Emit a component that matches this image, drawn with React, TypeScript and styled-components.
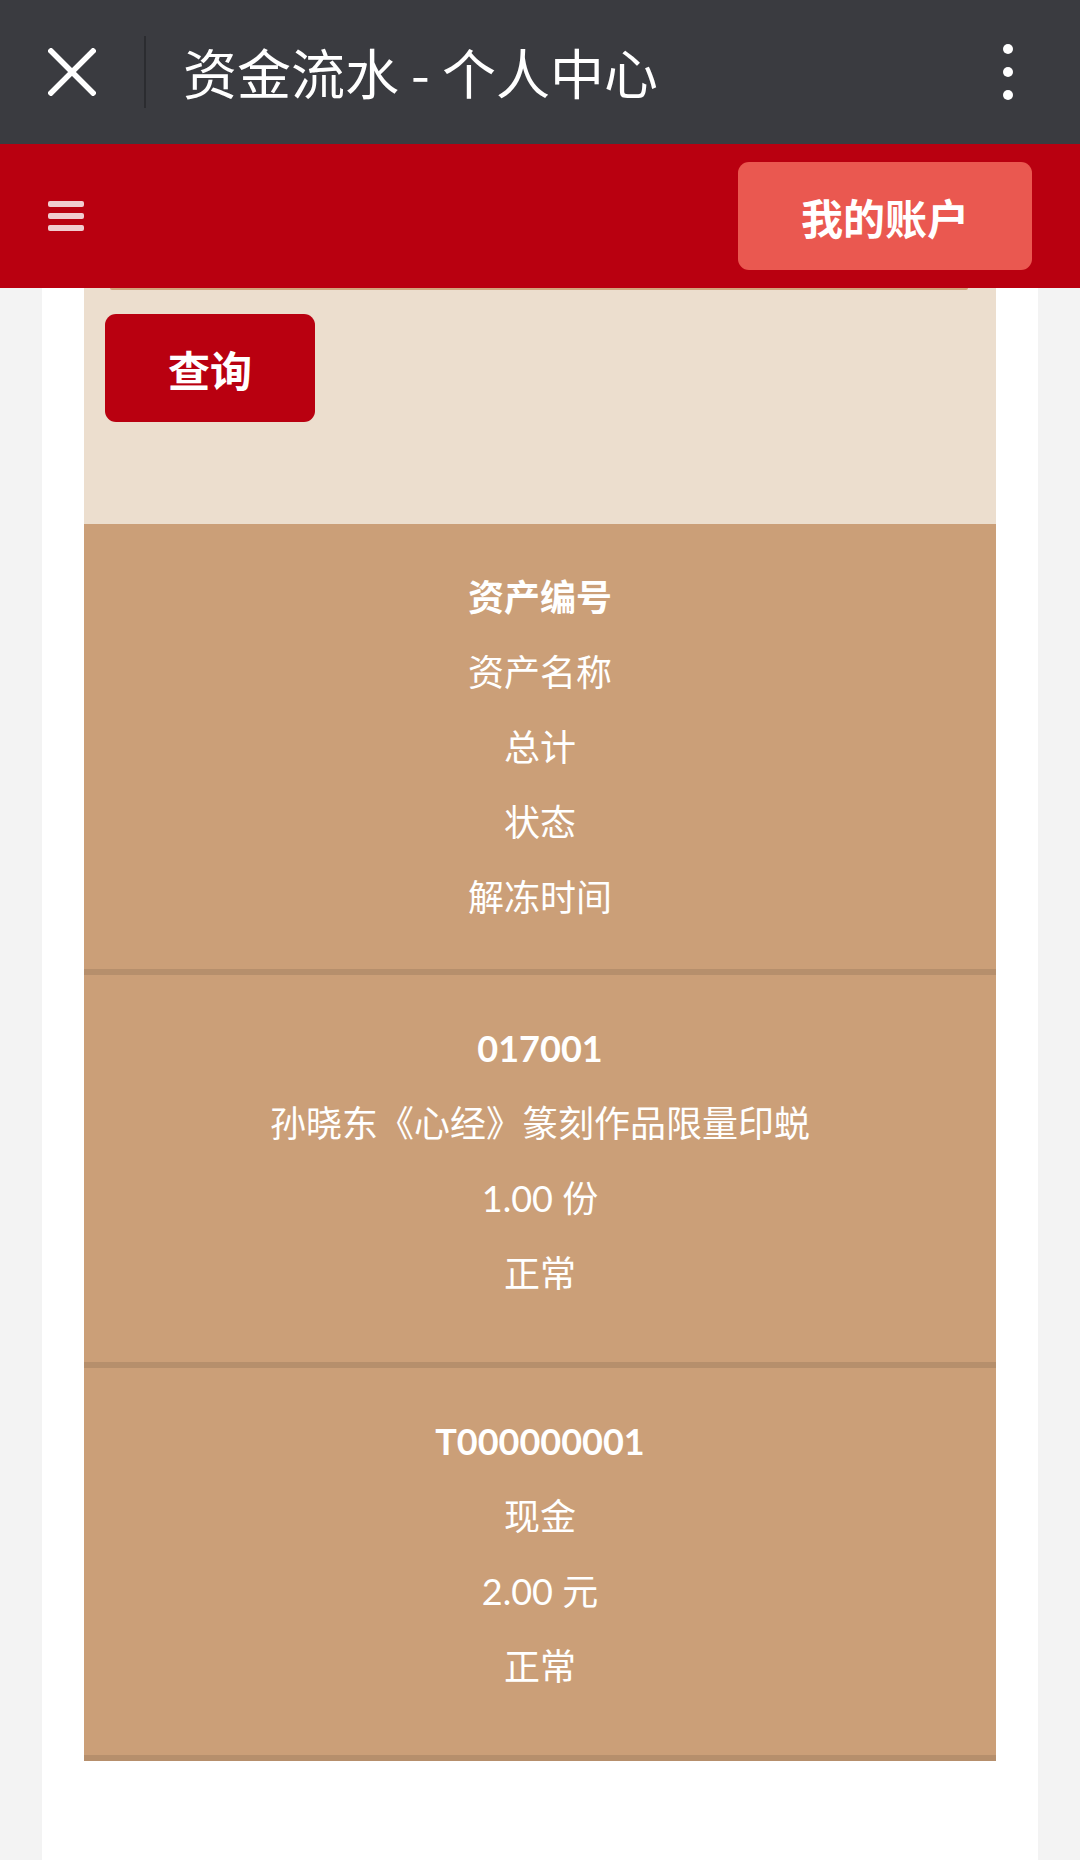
import React from "react";
import styled, { createGlobalStyle } from "styled-components";

const GlobalStyle = createGlobalStyle`
  html, body {
    margin: 0;
    padding: 0;
    background: #f3f3f3;
  }
  body {
    font-family: Lato, "Noto Sans CJK SC", sans-serif;
    -webkit-font-smoothing: antialiased;
  }
  * { box-sizing: border-box; }
`;

const Page = styled.div`
  width: 1080px;
  min-height: 1860px;
  display: flex;
  flex-direction: column;
  background: #f3f3f3;
`;

const TopBar = styled.header`
  height: 144px;
  background: #3a3b40;
  display: flex;
  align-items: center;
  padding-right: 67px;
`;

const CloseBox = styled.div`
  width: 144px;
  height: 144px;
  display: flex;
  align-items: center;
  justify-content: center;
`;

const Divider = styled.div`
  width: 2px;
  height: 72px;
  background: #2b2c30;
`;

const Title = styled.h1`
  margin: 0 0 0 37px;
  flex: 1;
  font-family: "Noto Sans CJK SC", sans-serif;
  font-weight: 400;
  font-size: 54px;
  line-height: 1;
  color: #ffffff;
  white-space: nowrap;
`;

const Dots = styled.div`
  display: flex;
  flex-direction: column;
  gap: 13px;
`;

const Dot = styled.span`
  width: 10px;
  height: 10px;
  border-radius: 50%;
  background: #ffffff;
`;

const NavBar = styled.nav`
  height: 144px;
  background: #b90010;
  display: flex;
  align-items: center;
  justify-content: space-between;
  padding: 0 48px;
`;

const Burger = styled.div`
  width: 36px;
  display: flex;
  flex-direction: column;
  gap: 6px;
`;

const BurgerBar = styled.span`
  height: 6px;
  border-radius: 2px;
  background: rgba(255, 255, 255, 0.8);
`;

const AccountButton = styled.button`
  width: 294px;
  height: 108px;
  border: none;
  border-radius: 11px;
  background: #ea5850;
  color: #ffffff;
  font-family: "Noto Sans CJK SC", sans-serif;
  font-weight: 700;
  font-size: 42px;
  padding: 0;
`;

const Body = styled.main`
  flex: 1;
  display: flex;
  padding: 0 42px;
`;

const Card = styled.section`
  flex: 1;
  background: #ffffff;
  padding: 0 42px;
`;

const FilterPanel = styled.div`
  background: #ecdece;
  padding: 0 0 102px 21px;
`;

const InputEdge = styled.div`
  height: 2px;
  margin: 0 28px 0 5px;
  background: #d1a57c;
  border-radius: 0 0 6px 6px;
`;

const QueryButton = styled.button`
  display: block;
  margin-top: 24px;
  width: 210px;
  height: 108px;
  border: none;
  border-radius: 11px;
  background: #b90010;
  color: #ffffff;
  font-family: "Noto Sans CJK SC", sans-serif;
  font-weight: 700;
  font-size: 42px;
  padding: 0;
`;

const Table = styled.div`
  display: flex;
  flex-direction: column;
`;

const Row = styled.div`
  background: #cb9f78;
  border-bottom: 6px solid #b68f6c;
  padding: 36px 0 34px;
  display: flex;
  flex-direction: column;
  align-items: center;
`;

const Cell = styled.div<{ $bold?: boolean; $empty?: boolean }>`
  height: ${(p) => (p.$empty ? "17px" : "75px")};
  line-height: 75px;
  font-size: 36px;
  color: #ffffff;
  font-weight: ${(p) => (p.$bold ? 700 : 400)};
  text-align: center;
  white-space: nowrap;
`;

type Item = { code: string; name: string; total: string; status: string; time: string };

const items: Item[] = [
  { code: "017001", name: "孙晓东《心经》篆刻作品限量印蜕", total: "1.00 份", status: "正常", time: "" },
  { code: "T000000001", name: "现金", total: "2.00 元", status: "正常", time: "" },
];

const CloseIcon = () => (
  <svg width="48" height="48" viewBox="0 0 48 48">
    <path d="M3 3 L45 45 M45 3 L3 45" stroke="#ffffff" strokeWidth="5.5" strokeLinecap="square" />
  </svg>
);

export default function App() {
  return (
    <Page>
      <GlobalStyle />
      <TopBar>
        <CloseBox>
          <CloseIcon />
        </CloseBox>
        <Divider />
        <Title>资金流水 - 个人中心</Title>
        <Dots>
          <Dot />
          <Dot />
          <Dot />
        </Dots>
      </TopBar>
      <NavBar>
        <Burger>
          <BurgerBar />
          <BurgerBar />
          <BurgerBar />
        </Burger>
        <AccountButton>我的账户</AccountButton>
      </NavBar>
      <Body>
        <Card>
          <FilterPanel>
            <InputEdge />
            <QueryButton>查询</QueryButton>
          </FilterPanel>
          <Table>
            <Row>
              <Cell $bold>资产编号</Cell>
              <Cell>资产名称</Cell>
              <Cell>总计</Cell>
              <Cell>状态</Cell>
              <Cell>解冻时间</Cell>
            </Row>
            {items.map((it) => (
              <Row key={it.code}>
                <Cell $bold>{it.code}</Cell>
                <Cell>{it.name}</Cell>
                <Cell>{it.total}</Cell>
                <Cell>{it.status}</Cell>
                <Cell $empty>{it.time}</Cell>
              </Row>
            ))}
          </Table>
        </Card>
      </Body>
    </Page>
  );
}
